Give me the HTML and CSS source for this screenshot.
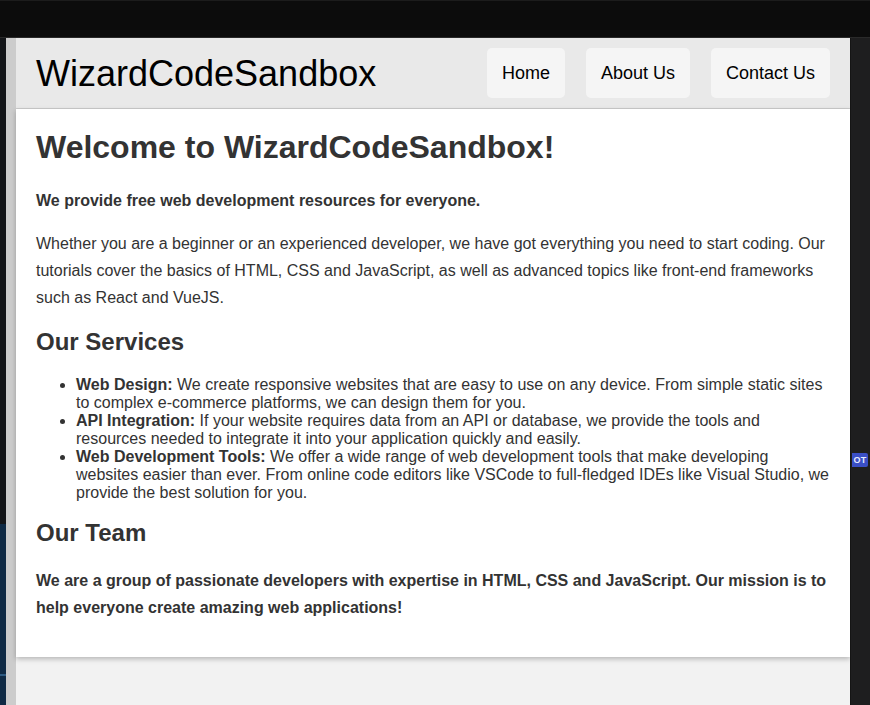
FILE: index.html
```html
<!DOCTYPE html>
<html lang="en">
<head>
<meta charset="utf-8">
<title>WizardCodeSandbox</title>
<link rel="stylesheet" href="styles.css">
</head>
<body>
<div class="topbar"></div>
<div class="frame">
  <div class="side-left">
    <div class="side-dark"><div class="side-blue"><div class="side-line"></div></div></div>
    <div class="side-gray"></div>
  </div>
  <div class="page">
    <header class="site-header">
      <div class="logo">WizardCodeSandbox</div>
      <nav class="nav">
        <a class="nav-btn" href="#">Home</a>
        <a class="nav-btn" href="#">About Us</a>
        <a class="nav-btn" href="#">Contact Us</a>
      </nav>
    </header>
    <main class="content">
      <h1>Welcome to WizardCodeSandbox!</h1>
      <p class="lead">We provide free web development resources for everyone.</p>
      <p>Whether you are a beginner or an experienced developer, we have got everything you need to start coding. Our tutorials cover the basics of HTML, CSS and JavaScript, as well as advanced topics like front-end frameworks such as React and VueJS.</p>
      <h2>Our Services</h2>
      <ul class="services">
        <li><strong>Web Design:</strong> We create responsive websites that are easy to use on any device. From simple static sites to complex e-commerce platforms, we can design them for you.</li>
        <li><strong>API Integration:</strong> If your website requires data from an API or database, we provide the tools and resources needed to integrate it into your application quickly and easily.</li>
        <li><strong>Web Development Tools:</strong> We offer a wide range of web development tools that make developing websites easier than ever. From online code editors like VSCode to full-fledged IDEs like Visual Studio, we provide the best solution for you.</li>
      </ul>
      <h2>Our Team</h2>
      <p class="lead">We are a group of passionate developers with expertise in HTML, CSS and JavaScript. Our mission is to help everyone create amazing web applications!</p>
    </main>
  </div>
  <div class="side-right"><span class="badge">OT</span></div>
</div>
</body>
</html>
```
FILE: styles.css
```css
html, body {
  margin: 0;
  padding: 0;
  height: 100%;
  overflow: hidden;
}
body {
  background: #0c0c0c;
  font-family: "Liberation Sans", Arial, sans-serif;
  display: flex;
  flex-direction: column;
}
.topbar {
  flex: none;
  background: #0c0c0c;
  border-top: 1px solid #1c1c1c;
  border-bottom: 1px solid #2a2a2a;
  box-sizing: border-box;
  height: 38px;
}
.frame {
  flex: 1;
  display: flex;
  min-height: 0;
}
.side-left {
  display: flex;
  flex: none;
}
.side-dark {
  width: 6px;
  background: #131518;
  display: flex;
  flex-direction: column;
  justify-content: flex-end;
}
.side-blue {
  height: 181px;
  background: #0f2a45;
  position: relative;
}
.side-line {
  position: absolute;
  left: 0;
  right: 0;
  top: 150px;
  height: 2px;
  background: #2d5a82;
}
.side-gray {
  width: 10px;
  background: #cccccc;
}
.side-right {
  width: 20px;
  flex: none;
  background: #1e1e1f;
  border-left: 1px solid #151515;
  box-sizing: border-box;
  position: relative;
}
.badge {
  position: absolute;
  left: 1px;
  top: 415px;
  width: 16px;
  height: 14px;
  background: #3a4fc6;
  color: #e8ecff;
  font-size: 9px;
  font-weight: bold;
  line-height: 14px;
  text-align: center;
  border-radius: 0 2px 2px 0;
  letter-spacing: 0.3px;
}
.page {
  flex: 1;
  background: #f2f2f2;
  color: #333;
  min-width: 0;
}
.site-header {
  background: #e9e9e9;
  border-bottom: 1px solid #cccccc;
  display: flex;
  align-items: center;
  justify-content: space-between;
  padding: 10px 20px;
  height: 71px;
  box-sizing: border-box;
}
.logo {
  font-size: 36px;
  color: #000;
  line-height: 1;
  padding-top: 2px;
}
.nav {
  display: flex;
  gap: 21px;
}
.nav-btn {
  display: flex;
  align-items: center;
  height: 50px;
  padding: 0 15px;
  background: #f5f5f5;
  border-radius: 5px;
  color: #000;
  text-decoration: none;
  font-size: 18px;
}
.content {
  background: #fff;
  padding: 20px;
  box-shadow: 0 2px 5px rgba(0, 0, 0, 0.25);
}
.content h1 {
  margin: 0 0 21px;
  font-size: 32px;
  line-height: 37px;
}
.content p {
  margin: 16px 0;
  font-size: 16px;
  line-height: 27px;
}
.content p.lead {
  font-weight: bold;
}
.content h1 + p {
  margin-top: 0;
}
.content h2 {
  font-size: 24px;
  margin: 17px 0 20px;
  line-height: 28px;
}
.services {
  margin: 16px 0;
  padding-left: 40px;
  font-size: 16px;
  line-height: 18px;
}
```
